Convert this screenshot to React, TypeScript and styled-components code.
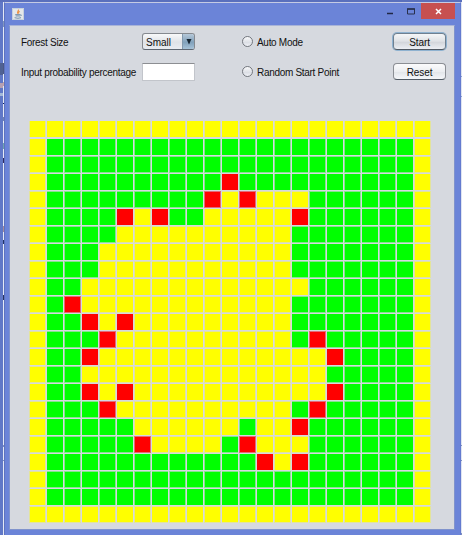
import React from "react";
import styled, { createGlobalStyle } from "styled-components";

const GlobalStyle = createGlobalStyle`
  * { box-sizing: border-box; }
  body { margin: 0; overflow: hidden; background: #6b84d8; }
`;

const Desktop = styled.div`
  width: 462px;
  height: 535px;
  display: grid;
  grid-template-columns: 3px 1px 457px 1px;
  grid-template-rows: 2px 533px;
  font: 10px "Liberation Sans", Arial, sans-serif;
  color: #111;
`;

const TopEdge = styled.div`
  grid-column: 1 / -1;
  background: #5a70bd;
`;

const Strip = styled.div<{ $fill: string }>`
  background: ${(p) => p.$fill};
`;

const Frame = styled.div`
  display: flex;
  flex-direction: column;
  background: #6b84d8;
  border-top: 1px solid #c5cbe4;
  border-left: 1px solid #5d73bf;
  border-right: 1px solid #647bcf;
`;

const TitleBar = styled.header`
  height: 22px;
  display: flex;
  align-items: flex-start;
  justify-content: space-between;
  padding: 0 5px 0 7px;
`;

const JavaIcon = styled.svg`
  width: 12px;
  height: 12px;
  margin-top: 5px;
`;

const WindowButtons = styled.div`
  display: flex;
`;

const WindowButton = styled.button<{ $width: number; $close?: boolean }>`
  width: ${(p) => p.$width}px;
  height: 16px;
  padding: 0;
  border: 0;
  display: flex;
  align-items: center;
  justify-content: center;
  background: ${(p) => (p.$close ? "#c75050" : "transparent")};
`;

const Content = styled.main`
  width: 446px;
  height: 505px;
  margin-left: 4px;
  background: #d6d9df;
  border: 1px solid #8093cc;
  border-top-color: #a9b4d7;
`;

const Controls = styled.div`
  height: 95px;
  padding-top: 5px;
`;

const ControlRow = styled.div`
  height: 30px;
  padding-bottom: 9px;
  display: grid;
  grid-template-columns: 121px 100px 151px 54px;
  align-items: center;
  margin-left: 11px;
`;

const Select = styled.button`
  width: 53px;
  height: 17px;
  padding: 0 0 0 3px;
  display: flex;
  justify-content: space-between;
  align-items: center;
  font: inherit;
  color: inherit;
  border: 1px solid #85898f;
  border-bottom-color: #5e6671;
  border-radius: 3px;
  background: linear-gradient(#f8f9fa, #dfe2e7 55%, #e9ecf2);
  overflow: hidden;
`;

const SelectArrow = styled.span`
  width: 12px;
  height: 15px;
  display: flex;
  align-items: center;
  justify-content: center;
  background: linear-gradient(#b6c8d8, #81a1bb 55%, #a6c2d8);
  border-left: 1px solid #8299ad;
`;

const TextField = styled.input`
  width: 53px;
  height: 18px;
  padding: 2px;
  font: inherit;
  background: #fff;
  border: 1px solid #c2c5cb;
  border-top-color: #8c8e92;
  outline: 0;
`;

const Choice = styled.label`
  display: flex;
  align-items: center;
  gap: 4px;
  white-space: nowrap;
`;

const Radio = styled.span`
  width: 11px;
  height: 11px;
  border: 1px solid #73777e;
  border-radius: 50%;
  background: linear-gradient(#fafafb, #dcdfe5 60%, #eef0f5);
`;

const PushButton = styled.button<{ $focused?: boolean }>`
  width: 53px;
  height: 17px;
  padding: 0;
  display: flex;
  align-items: center;
  justify-content: center;
  font: inherit;
  color: inherit;
  border: 1px solid ${(p) => (p.$focused ? "#6f8090" : "#8b8e94")};
  border-bottom-color: #515a64;
  border-radius: 4px;
  background: ${(p) =>
    p.$focused
      ? "linear-gradient(#f5f6f8, #dfe2e6 48%, #d3d6db 55%, #eceff4)"
      : "linear-gradient(#fbfbfc, #eceef1 50%, #e3e6ea 55%, #f5f7fa)"};
  box-shadow: ${(p) => (p.$focused ? "0 0 0 1px #8fb2d0" : "none")};
`;

const Label = styled.span<{ $spacing?: number }>`
  letter-spacing: ${(p) => p.$spacing ?? -0.3}px;
  line-height: 11px;
  padding-top: 2px;
  white-space: nowrap;
`;

const Forest = styled.div`
  display: grid;
  grid-template-columns: 18px repeat(11, 17px 18px);
  grid-template-rows: 18px repeat(11, 17px 18px);
  margin-left: 19px;
`;

type State = "Y" | "G" | "R";

const stateColors: Record<State, string> = {
  Y: "#ffff00",
  G: "#00ff00",
  R: "#ff0000",
};

const edgeColors: Record<State, string> = {
  Y: "#e3e49c",
  G: "#86e58f",
  R: "#e16c78",
};

// Half-pixel cell boundaries alternate between crisp and softened edges.
const Tree = styled.span<{ $state: State; $softX: boolean; $softY: boolean }>`
  width: ${(p) => (p.$softX ? 17 : 16)}px;
  height: ${(p) => (p.$softY ? 17 : 16)}px;
  background: ${(p) => stateColors[p.$state]};
  border: 0 solid ${(p) => edgeColors[p.$state]};
  border-width: ${(p) => (p.$softY ? 1 : 0)}px ${(p) => (p.$softX ? 1 : 0)}px;
`;

// Each row is run-length encoded: state followed by the number of cells.
const forest = [
  "Y23",
  "Y1 G21 Y1",
  "Y1 G21 Y1",
  "Y1 G10 R1 G10 Y1",
  "Y1 G9 R1 Y1 R1 Y3 G6 Y1",
  "Y1 G4 R1 Y1 R1 G2 Y5 R1 G6 Y1",
  "Y1 G4 Y10 G7 Y1",
  "Y1 G3 Y11 G7 Y1",
  "Y1 G3 Y11 G7 Y1",
  "Y1 G2 Y13 G6 Y1",
  "Y1 G1 R1 Y12 G7 Y1",
  "Y1 G2 R1 Y1 R1 Y9 G7 Y1",
  "Y1 G3 R1 Y10 G1 R1 G5 Y1",
  "Y1 G2 R1 Y13 R1 G4 Y1",
  "Y1 G2 Y14 G5 Y1",
  "Y1 G2 R1 Y1 R1 Y11 R1 G4 Y1",
  "Y1 G3 R1 Y10 G1 R1 G5 Y1",
  "Y1 G5 Y6 G1 Y2 R1 G6 Y1",
  "Y1 G5 R1 Y4 G1 R1 Y3 G6 Y1",
  "Y1 G12 R1 Y1 R1 G6 Y1",
  "Y1 G21 Y1",
  "Y1 G21 Y1",
  "Y23",
];

const cells = forest.map((row) =>
  row
    .split(" ")
    .flatMap((run) => Array<State>(Number(run.slice(1))).fill(run[0] as State)),
);

const leftEdge =
  "linear-gradient(transparent 61px, #506294 61px 73px, transparent 73px 81px, #b5a0b4 81px 86px, transparent 86px 91px, #a3b9da 91px 94px, transparent 94px), #6078c7";
const leftLine =
  "linear-gradient(transparent 19px, #8196bd 19px 25px, transparent 25px 61px, #4d5985 61px 72px, transparent 72px 80px, #c2a3a6 80px 84px, transparent 84px 101px, #14235a 101px 102px, transparent 102px 115px, #7183b0 115px 119px, transparent 119px 141px, #70a5ad 141px 147px, transparent 147px 156px, #302b61 156px 161px, transparent 161px 224px, #a58c9a 224px 230px, transparent 230px 238px, #243568 238px 242px, transparent 242px 293px, #2c355e 293px 298px, transparent 298px 443px, #8090bd 443px 445px, transparent 445px 458px, #8090bd 458px 459px, transparent 459px), #e4e9f5";
const rightLine =
  "linear-gradient(transparent 74px, #8d9ed1 74px 75px, transparent 75px 94px, #8d9ed1 94px 95px, transparent 95px 443px, #8090bd 443px 444px, transparent 444px 458px, #8090bd 458px 459px, transparent 459px 531px, #8090bd 531px), #dfe4f1";

export default function App() {
  return (
    <>
      <GlobalStyle />
      <Desktop>
        <TopEdge />
        <Strip $fill={leftEdge} />
        <Strip $fill={leftLine} />
        <Frame>
          <TitleBar>
            <JavaIcon viewBox="0 0 13 13">
              <rect x=".5" y=".5" width="12" height="12" fill="#e4e7e9" stroke="#c8d2dd" />
              <path d="M6.8 1.7C8 3.2 4.5 4 6.6 6.5M8.3 3.5Q6.5 4.5 7.4 6" fill="none" stroke="#ec9144" strokeWidth="1.3" />
              <path d="M3.5 7.2h5.2M4 8.6h4.5M2.8 10.5q3.8 1.3 7 0M9 7.2q2.4 0 0 1.7" fill="none" stroke="#6687a5" />
            </JavaIcon>
            <WindowButtons>
              <WindowButton $width={20} aria-label="Minimize">
                <svg width="8" height="10"><path d="M0 7.5h6" stroke="#202745" strokeWidth="1.5" /></svg>
              </WindowButton>
              <WindowButton $width={20} aria-label="Maximize">
                <svg width="8" height="8"><path d="M.5 2h7v5h-7z" fill="none" stroke="#29304d" /><path d="M0 2h8" stroke="#29304d" strokeWidth="1.5" /></svg>
              </WindowButton>
              <WindowButton $width={34} $close aria-label="Close">
                <svg width="7" height="7"><path d="M1 1l5 5M6 1L1 6" stroke="#fff" strokeWidth="1.5" /></svg>
              </WindowButton>
            </WindowButtons>
          </TitleBar>
          <Content>
            <Controls>
              <ControlRow>
                <Label>Forest Size</Label>
                <Select>
                  <Label $spacing={0}>Small</Label>
                  <SelectArrow>
                    <svg width="6" height="6"><path d="M.5 0h5L3 5.5z" fill="#172633" /></svg>
                  </SelectArrow>
                </Select>
                <Choice><Radio /><Label>Auto Mode</Label></Choice>
                <PushButton $focused><Label $spacing={-0.1}>Start</Label></PushButton>
              </ControlRow>
              <ControlRow>
                <Label>Input probability percentage</Label>
                <TextField aria-label="Input probability percentage" />
                <Choice><Radio /><Label>Random Start Point</Label></Choice>
                <PushButton><Label $spacing={-0.1}>Reset</Label></PushButton>
              </ControlRow>
            </Controls>
            <Forest>
              {cells.map((row, y) =>
                row.map((state, x) => (
                  <Tree
                    key={`${x}-${y}`}
                    $state={state}
                    $softX={x % 2 === 0}
                    $softY={y > 0 && y % 2 === 0}
                  />
                )),
              )}
            </Forest>
          </Content>
        </Frame>
        <Strip $fill={rightLine} />
      </Desktop>
    </>
  );
}
